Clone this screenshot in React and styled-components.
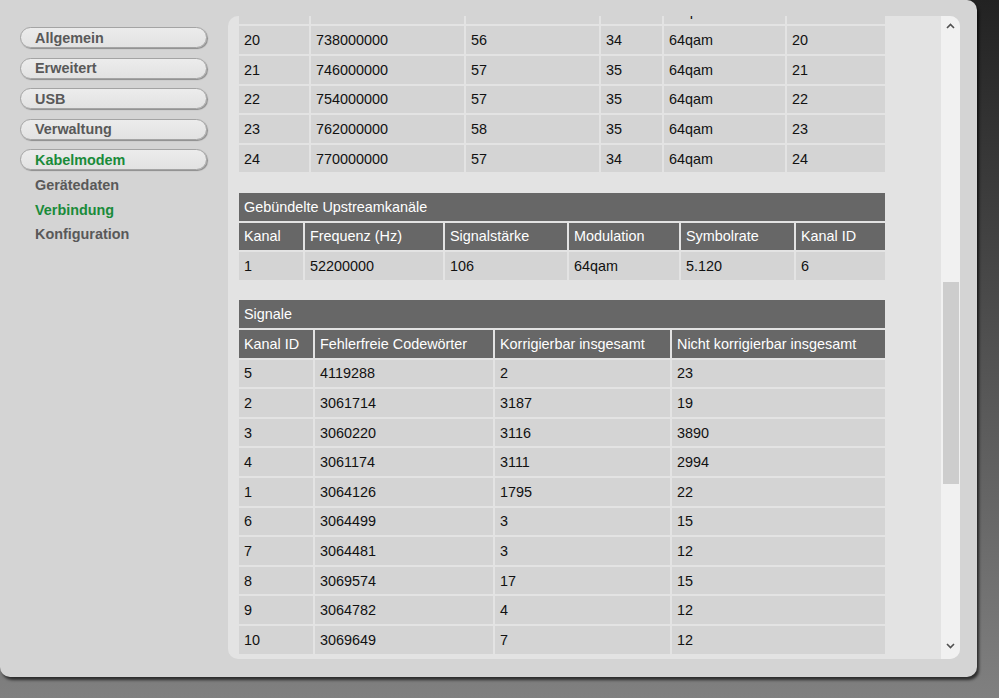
import React, { useLayoutEffect, useRef } from "react";
import styled, { createGlobalStyle } from "styled-components";

const Global = createGlobalStyle`
  html, body { margin: 0; padding: 0; }
  body {
    width: 999px;
    height: 698px;
    overflow: hidden;
    background: linear-gradient(to bottom, #222222 0px, #808080 698px);
    font-family: "Liberation Sans", Arial, sans-serif;
  }
`;

const Panel = styled.div`
  width: 977px;
  height: 677px;
  box-sizing: border-box;
  background: #d4d4d4;
  border-radius: 0 10px 10px 10px;
  box-shadow: 2px 3px 3px rgba(0, 0, 0, 0.65);
  display: flex;
  align-items: flex-start;
`;

const Sidebar = styled.nav`
  width: 228px;
  box-sizing: border-box;
  padding: 27px 0 0 20px;
  display: flex;
  flex-direction: column;
`;

const NavButton = styled.div`
  width: 187px;
  height: 21px;
  box-sizing: border-box;
  margin-bottom: 9.5px;
  border: 1px solid #a4a4a4;
  border-radius: 11px;
  background: linear-gradient(to bottom, #ececec, #e2e2e2);
  box-shadow: 1px 1px 1px #8c8c8c;
  padding-left: 14px;
  display: flex;
  align-items: center;
  font-size: 14.4px;
  font-weight: bold;
  color: ${(p) => (p.$active ? "#1a8b3a" : "#595959")};
`;

const SubList = styled.div`
  margin-top: -6.5px;
  display: flex;
  flex-direction: column;
`;

const SubItem = styled.div`
  height: 24.7px;
  line-height: 24.7px;
  padding-left: 15px;
  font-size: 14.4px;
  font-weight: bold;
  color: ${(p) => (p.$active ? "#1a8b3a" : "#595959")};
`;

const Frame = styled.div`
  margin-top: 16px;
  width: 732px;
  height: 643px;
  border-radius: 10px;
  overflow: hidden;
  background: #e3e3e3;
  display: flex;
`;

const Scroller = styled.div`
  position: relative;
  flex: 1;
  height: 100%;
  overflow: hidden;
  padding: 0 0 0 9px;
`;

const Content = styled.div`
  padding: 10px 0 4px;
`;

const Table = styled.table`
  width: 650px;
  table-layout: fixed;
  border-collapse: separate;
  border-spacing: 2px;
  margin-bottom: 16.6px;
  font-size: 14.4px;
`;

const Title = styled.th`
  height: 27.6px;
  padding: 0 5px;
  background: #676767;
  color: #ffffff;
  font-weight: normal;
  text-align: left;
  white-space: nowrap;
`;

const Head = styled.th`
  height: 27.6px;
  padding: 0 5px;
  background: #676767;
  color: #ffffff;
  font-weight: normal;
  text-align: left;
  white-space: nowrap;
  overflow: hidden;
`;

const Cell = styled.td`
  height: 27.6px;
  padding: 0 5px;
  background: #d4d4d4;
  color: #111111;
  text-align: left;
  white-space: nowrap;
`;

const Scrollbar = styled.div`
  width: 19px;
  height: 100%;
  background: #f1f1f1;
  display: flex;
  flex-direction: column;
  align-items: center;
`;

const Arrow = styled.div`
  height: 20px;
  width: 100%;
  margin-bottom: ${(p) => (p.$bottom ? 3 : 0)}px;
  display: flex;
  align-items: center;
  justify-content: center;
  color: #505050;
`;

const Track = styled.div`
  flex: 1;
  width: 100%;
  display: flex;
  flex-direction: column;
  align-items: center;
`;

const Thumb = styled.div`
  width: 16px;
  margin-top: ${(p) => p.$offset}px;
  height: ${(p) => p.$size}px;
  background: #cdcdcd;
`;

const Chevron = ({ up }) => (
  <svg width="9" height="6" viewBox="0 0 9 6">
    <path
      d={up ? "M1 5 L4.5 1.5 L8 5" : "M1 1 L4.5 4.5 L8 1"}
      fill="none"
      stroke="currentColor"
      strokeWidth="1.6"
    />
  </svg>
);

const downRows = Array.from({ length: 24 }, (_, i) => {
  const ch = i + 1;
  const freq = 738000000 - (20 - ch) * 8000000;
  const power = [55, 55, 56, 56, 55, 56, 56, 57, 56, 56, 57, 57, 56, 56, 57, 56, 56, 57, 56, 56, 57, 57, 58, 57][i];
  const snr = [35, 35, 35, 35, 34, 35, 35, 35, 34, 35, 35, 35, 35, 34, 35, 35, 35, 35, 35, 34, 35, 35, 35, 34][i];
  return [String(ch), String(freq), String(power), String(snr), "64qam", String(ch)];
});

const signalRows = [
  ["5", "4119288", "2", "23"],
  ["2", "3061714", "3187", "19"],
  ["3", "3060220", "3116", "3890"],
  ["4", "3061174", "3111", "2994"],
  ["1", "3064126", "1795", "22"],
  ["6", "3064499", "3", "15"],
  ["7", "3064481", "3", "12"],
  ["8", "3069574", "17", "15"],
  ["9", "3064782", "4", "12"],
  ["10", "3069649", "7", "12"],
];

function DataTable({ title, widths, headers, rows, rowRef, refIndex }) {
  return (
    <Table>
      <colgroup>
        {widths.map((w, i) => (
          <col key={i} style={{ width: w }} />
        ))}
      </colgroup>
      <thead>
        <tr>
          <Title colSpan={widths.length}>{title}</Title>
        </tr>
        <tr>
          {headers.map((h) => (
            <Head key={h}>{h}</Head>
          ))}
        </tr>
      </thead>
      <tbody>
        {rows.map((r, i) => (
          <tr key={i} ref={i === refIndex ? rowRef : undefined}>
            {r.map((c, j) => (
              <Cell key={j}>{c}</Cell>
            ))}
          </tr>
        ))}
      </tbody>
    </Table>
  );
}

export default function App() {
  const scrollRef = useRef(null);
  const rowRef = useRef(null);

  useLayoutEffect(() => {
    const s = scrollRef.current;
    const r = rowRef.current;
    if (!s || !r) return;
    const off = r.getBoundingClientRect().top - s.getBoundingClientRect().top + s.scrollTop;
    s.scrollTop = Math.round(off - 10.7);
  }, []);

  return (
    <>
      <Global />
      <Panel>
        <Sidebar>
          <NavButton>Allgemein</NavButton>
          <NavButton>Erweitert</NavButton>
          <NavButton>USB</NavButton>
          <NavButton>Verwaltung</NavButton>
          <NavButton $active>Kabelmodem</NavButton>
          <SubList>
            <SubItem>Gerätedaten</SubItem>
            <SubItem $active>Verbindung</SubItem>
            <SubItem>Konfiguration</SubItem>
          </SubList>
        </Sidebar>
        <Frame>
          <Scroller ref={scrollRef}>
            <Content>
              <DataTable
                title="Gebündelte Downstreamkanäle"
                widths={[70, 153, 133, 61, 121, 98]}
                headers={["Kanal", "Frequenz (Hz)", "Signalstärke", "SNR", "Modulation", "Kanal ID"]}
                rows={downRows}
                rowRef={rowRef}
                refIndex={19}
              />
              <DataTable
                title="Gebündelte Upstreamkanäle"
                widths={[64, 138, 122, 110, 113, 89]}
                headers={["Kanal", "Frequenz (Hz)", "Signalstärke", "Modulation", "Symbolrate", "Kanal ID"]}
                rows={[["1", "52200000", "106", "64qam", "5.120", "6"]]}
              />
              <DataTable
                title="Signale"
                widths={[74, 178, 175, 213]}
                headers={["Kanal ID", "Fehlerfreie Codewörter", "Korrigierbar insgesamt", "Nicht korrigierbar insgesamt"]}
                rows={signalRows}
              />
            </Content>
          </Scroller>
          <Scrollbar>
            <Arrow>
              <Chevron up />
            </Arrow>
            <Track>
              <Thumb $offset={246} $size={202} />
            </Track>
            <Arrow $bottom>
              <Chevron />
            </Arrow>
          </Scrollbar>
        </Frame>
      </Panel>
    </>
  );
}
